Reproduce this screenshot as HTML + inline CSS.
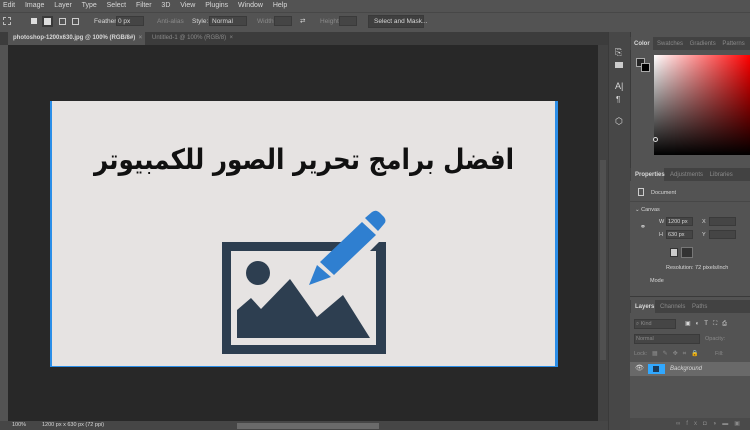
<!DOCTYPE html>
<html><head><meta charset="utf-8"><style>
*{margin:0;padding:0;box-sizing:border-box}
body{width:750px;height:430px;overflow:hidden;background:#535353;font-family:"Liberation Sans",sans-serif;position:relative;color:#ddd}
.a{position:absolute}
.t{font-size:6.5px;color:#d8d8d8;white-space:nowrap}
.d{color:#8a8a8a}
.box{background:#454545;border:1px solid #3a3a3a}
</style></head><body>
<!-- menu -->
<div class="a" style="left:0;top:0;width:750px;height:12px;background:#535353"></div>
<div class="a t" style="left:3px;top:2px;font-size:7px;word-spacing:3px">Edit&nbsp; Image&nbsp; Layer&nbsp; Type&nbsp; Select&nbsp; Filter&nbsp; 3D&nbsp; View&nbsp; Plugins&nbsp; Window&nbsp; Help</div>
<!-- options -->
<div class="a" style="left:0;top:12px;width:750px;height:20px;background:#535353;border-top:1px solid #474747"></div>
<div class="a" style="left:3px;top:17px;width:8px;height:8px;border:1px dashed #bbb"></div>
<div class="a" style="left:31px;top:18px;width:6px;height:6px;background:#ddd"></div>
<div class="a" style="left:42px;top:16px;width:11px;height:11px;background:#3a3a3a"></div>
<div class="a" style="left:44px;top:18px;width:7px;height:7px;background:#ddd"></div>
<div class="a" style="left:59px;top:18px;width:7px;height:7px;border:1px solid #ccc"></div>
<div class="a" style="left:72px;top:18px;width:7px;height:7px;border:1px solid #ccc"></div>
<div class="a t" style="left:94px;top:18px">Feather:</div>
<div class="a box" style="left:116px;top:16px;width:28px;height:10px"></div>
<div class="a t" style="left:118px;top:18px">0 px</div>
<div class="a t d" style="left:157px;top:18px">Anti-alias</div>
<div class="a t" style="left:192px;top:18px">Style:</div>
<div class="a box" style="left:209px;top:16px;width:38px;height:10px"></div>
<div class="a t" style="left:212px;top:18px">Normal</div>
<div class="a t d" style="left:257px;top:18px">Width:</div>
<div class="a box" style="left:274px;top:16px;width:18px;height:10px"></div>
<div class="a t" style="left:300px;top:17px">⇄</div>
<div class="a t d" style="left:320px;top:18px">Height:</div>
<div class="a box" style="left:339px;top:16px;width:18px;height:10px"></div>
<div class="a box" style="left:368px;top:15px;width:56px;height:13px;background:#3f3f3f"></div>
<div class="a t" style="left:374px;top:18px">Select and Mask...</div>
<!-- tabs -->
<div class="a" style="left:0;top:32px;width:608px;height:13px;background:#3c3c3c"></div>
<div class="a" style="left:8px;top:32px;width:137px;height:13px;background:#535353"></div>
<div class="a t" style="left:13px;top:35px;font-weight:bold;font-size:6px">photoshop-1200x630.jpg @ 100% (RGB/8#)&nbsp; <span class="d">×</span></div>
<div class="a t d" style="left:152px;top:35px;font-size:6px">Untitled-1 @ 100% (RGB/8)&nbsp; ×</div>
<!-- toolbar -->
<div class="a" style="left:0;top:45px;width:8px;height:385px;background:#535353"></div>
<!-- canvas -->
<div class="a" style="left:8px;top:45px;width:590px;height:376px;background:#282828"></div>
<div class="a" style="left:598px;top:45px;width:10px;height:376px;background:#424242"></div>
<div class="a" style="left:600px;top:160px;width:6px;height:200px;background:#505050"></div>
<!-- status -->
<div class="a" style="left:0;top:421px;width:608px;height:9px;background:#464646"></div>
<div class="a t" style="left:12px;top:422px;font-size:5.5px">100%</div>
<div class="a t" style="left:42px;top:422px;font-size:5.5px">1200 px x 630 px (72 ppi)</div>
<div class="a" style="left:237px;top:423px;width:142px;height:6px;background:#6a6a6a"></div>
<!-- image -->
<div class="a" style="left:50px;top:101px;width:508px;height:266px;background:#e6e3e2;border-left:2px solid #2b8ee8;border-right:3px solid #2b8ee8;border-bottom:1px solid #2b8ee8"></div>
<div class="a" style="left:0px;top:140px;width:608px;text-align:center;font-family:'DejaVu Sans',sans-serif;font-weight:bold;font-size:28px;color:#111;direction:rtl;line-height:40px;white-space:nowrap;transform:scaleX(0.88);transform-origin:304px 0">افضل برامج تحرير الصور للكمبيوتر</div>
<svg class="a" style="left:200px;top:200px" width="200" height="160" viewBox="0 0 200 160">
<path d="M22 42H142L132 51H31V145H176V51H170L179 42H186V154H22Z" fill="#2d3e50"/>
<circle cx="58" cy="73" r="12" fill="#2d3e50"/>
<path d="M37 138V110L51 98L61 109L90 79L117 117L143 95L170 138Z" fill="#2d3e50"/>
<path d="M109 85L117 65L131 77Z" fill="#2f7fd0"/>
<path d="M120 62L162 22L176 35L134 75Z" fill="#2f7fd0"/>
<path d="M165 18L172 12Q176 9 180 13L184 17Q187 21 184 24L178 31Z" fill="#2f7fd0"/>
</svg>
<!-- side icon strip -->
<div class="a" style="left:608px;top:32px;width:22px;height:398px;background:#474747;border-left:1px solid #3a3a3a"></div>
<div class="a t" style="left:615px;top:47px;font-size:9px">⎘</div>
<div class="a" style="left:615px;top:62px;width:8px;height:6px;background:#ccc"></div>
<div class="a t" style="left:615px;top:81px;font-size:9px">A|</div>
<div class="a t" style="left:616px;top:95px;font-size:8px">¶</div>
<div class="a t" style="left:615px;top:116px;font-size:9px">⬡</div>
<!-- color panel -->
<div class="a" style="left:630px;top:32px;width:120px;height:136px;background:#535353;border-left:1px solid #3a3a3a"></div>
<div class="a" style="left:630px;top:37px;width:120px;height:13px;background:#424242"></div>
<div class="a" style="left:631px;top:37px;width:22px;height:13px;background:#535353"></div>
<div class="a t" style="left:634px;top:41px;font-weight:bold;font-size:6px">Color</div>
<div class="a t d" style="left:657px;top:41px;font-size:6px">Swatches&nbsp;&nbsp;&nbsp; Gradients&nbsp;&nbsp;&nbsp; Patterns</div>
<div class="a" style="left:636px;top:58px;width:9px;height:9px;background:#262626;border:1px solid #aaa"></div>
<div class="a" style="left:641px;top:63px;width:9px;height:9px;background:#000;border:1px solid #aaa"></div>
<div class="a" style="left:654px;top:55px;width:96px;height:100px;background:linear-gradient(to bottom,transparent,#000),linear-gradient(to right,#fff,#f00)"></div>
<div class="a" style="left:653px;top:137px;width:5px;height:5px;border:1px solid #ddd;border-radius:50%"></div>
<!-- properties -->
<div class="a" style="left:630px;top:168px;width:120px;height:13px;background:#424242"></div>
<div class="a" style="left:631px;top:168px;width:33px;height:13px;background:#535353"></div>
<div class="a t" style="left:635px;top:172px;font-weight:bold;font-size:6px">Properties</div>
<div class="a t d" style="left:670px;top:172px;font-size:6px">Adjustments&nbsp;&nbsp;&nbsp; Libraries</div>
<div class="a" style="left:638px;top:188px;width:6px;height:8px;border:1px solid #ccc"></div>
<div class="a t" style="left:651px;top:190px;font-size:5.5px">Document</div>
<div class="a" style="left:630px;top:201px;width:120px;height:1px;background:#474747"></div>
<div class="a t" style="left:635px;top:207px;font-size:5.5px">⌄ Canvas</div>
<div class="a t" style="left:659px;top:219px;font-size:5.5px">W</div>
<div class="a box" style="left:666px;top:217px;width:27px;height:9px"></div>
<div class="a t" style="left:668px;top:219px;font-size:5.5px">1200 px</div>
<div class="a t" style="left:702px;top:219px;font-size:5.5px">X</div>
<div class="a box" style="left:709px;top:217px;width:27px;height:9px"></div>
<div class="a t" style="left:659px;top:232px;font-size:5.5px">H</div>
<div class="a box" style="left:666px;top:230px;width:27px;height:9px"></div>
<div class="a t" style="left:668px;top:232px;font-size:5.5px">630 px</div>
<div class="a t" style="left:702px;top:232px;font-size:5.5px">Y</div>
<div class="a box" style="left:709px;top:230px;width:27px;height:9px"></div>
<div class="a t" style="left:640px;top:223px;font-size:7px">⚭</div>
<div class="a" style="left:670px;top:248px;width:8px;height:9px;background:#ccc;border:1px solid #333"></div>
<div class="a" style="left:681px;top:247px;width:12px;height:11px;background:#333;border:1px solid #777"></div>
<div class="a t" style="left:666px;top:265px;font-size:5.5px">Resolution: 72 pixels/inch</div>
<div class="a t" style="left:650px;top:278px;font-size:5.5px">Mode</div>
<!-- layers -->
<div class="a" style="left:630px;top:296px;width:120px;height:1px;background:#3a3a3a"></div>
<div class="a" style="left:630px;top:300px;width:120px;height:13px;background:#424242"></div>
<div class="a" style="left:631px;top:300px;width:24px;height:13px;background:#535353"></div>
<div class="a t" style="left:635px;top:304px;font-weight:bold;font-size:6px">Layers</div>
<div class="a t d" style="left:660px;top:304px;font-size:6px">Channels&nbsp;&nbsp;&nbsp; Paths</div>
<div class="a box" style="left:634px;top:319px;width:42px;height:10px"></div>
<div class="a t d" style="left:636px;top:321px;font-size:5.5px">⌕ Kind</div>
<div class="a t" style="left:685px;top:320px;font-size:6px;letter-spacing:5px">▣◐T⛶⎙</div>
<div class="a box" style="left:634px;top:334px;width:66px;height:10px"></div>
<div class="a t d" style="left:636px;top:336px;font-size:5.5px">Normal</div>
<div class="a t d" style="left:705px;top:336px;font-size:5.5px">Opacity:</div>
<div class="a t d" style="left:634px;top:351px;font-size:5.5px">Lock:</div>
<div class="a t d" style="left:652px;top:350px;font-size:6px;letter-spacing:5px">▦✎✥⌗🔒</div>
<div class="a t d" style="left:715px;top:351px;font-size:5.5px">Fill:</div>
<div class="a" style="left:630px;top:362px;width:120px;height:14px;background:#696969"></div>
<div class="a t" style="left:635px;top:364px;font-size:7px">👁</div>
<div class="a" style="left:648px;top:364px;width:17px;height:10px;background:#31a8ff"></div>
<div class="a" style="left:653px;top:366px;width:6px;height:6px;background:#1a3a5a"></div>
<div class="a t" style="left:670px;top:366px;font-style:italic;font-size:6px">Background</div>
<div class="a" style="left:630px;top:418px;width:120px;height:12px;background:#4a4a4a"></div>
<div class="a t d" style="left:676px;top:420px;font-size:6px;letter-spacing:6px">∞fx◘◑▬▣</div>
</body></html>
